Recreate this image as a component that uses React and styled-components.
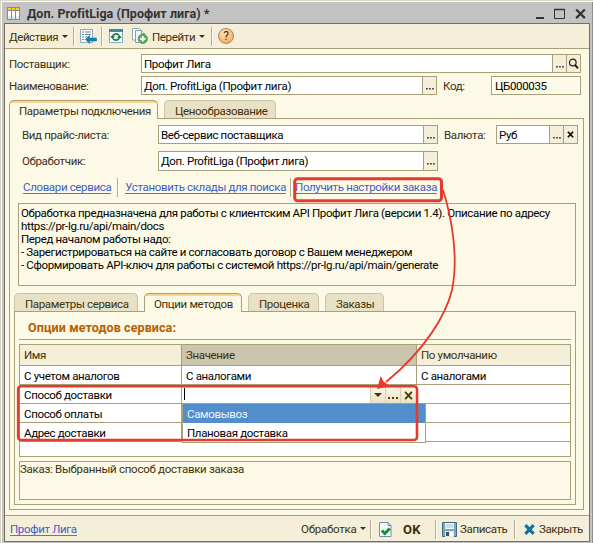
import React from "react";
import styled, { createGlobalStyle, css } from "styled-components";

const line = "#a9a078";
const cream = "#fcf9e6";
const sand = "#f5eed8";
const brown = "#40310a";

const Global = createGlobalStyle`
  *, *::before, *::after { box-sizing: border-box; }
  body {
    margin: 0;
    font: 11.5px/13px Roboto, "Liberation Sans", sans-serif;
    letter-spacing: -0.35px;
    color: #000;
  }
`;

const Frame = styled.div`
  position: relative;
  width: 593px;
  height: 543px;
  border: solid #ddd6c2;
  border-width: 1px 0 0 1px;
  background: #c3c3c3;
  box-shadow: inset 1px 1px 0 #fff, inset -1px 0 0 #8e8e8e;
  padding: 0 3px 2px 3px;
  display: flex;
  flex-direction: column;
  white-space: pre;
`;

const TitleBar = styled.header`
  height: 22px;
  flex: none;
  display: flex;
  align-items: center;
  padding: 3px 4px 0 3px;
`;

const Title = styled.h1`
  margin: 0 auto 0 7px;
  font-size: 12.5px;
  line-height: 15px;
  font-weight: 700;
  letter-spacing: 0.05px;
  color: #333;
`;

const Client = styled.div`
  flex: 1;
  border: 1px solid #716f65;
  background: ${cream};
  display: flex;
  flex-direction: column;
`;

const Toolbar = styled.div`
  height: 25px;
  flex: none;
  display: flex;
  align-items: center;
  padding-left: 4px;
  background: ${sand};
  border-bottom: 1px solid ${line};
`;

const Footer = styled.footer`
  height: 26px;
  flex: none;
  display: flex;
  align-items: center;
  padding: 2px 6px 0 5px;
  background: ${sand};
  border-top: 1px solid ${line};
`;

const Command = styled.div`
  display: flex;
  align-items: center;
  width: ${(p) => p.$w}px;
  gap: ${(p) => p.$gap || 4}px;
  padding-top: ${(p) => p.$drop || 0}px;
  letter-spacing: ${(p) => p.$ls || -0.35}px;
  color: ${brown};
`;

const Ok = styled.b`
  font-size: 13px;
  color: #3c2c06;
  letter-spacing: 0.4px;
`;

const Caret = styled.i`
  border: 3px solid transparent;
  border-top-color: ${brown};
  border-bottom: 0;
  margin-bottom: 2px;
`;

const Separator = styled.i`
  width: 2px;
  height: 19px;
  margin: 0 ${(p) => p.$after}px 0 ${(p) => p.$before}px;
  border-left: 1px solid #b5ae93;
  border-right: 1px solid #fffdf2;
`;

const Form = styled.main`
  flex: 1;
  display: flex;
  flex-direction: column;
  padding: 5px 5px 5px 4px;
`;

const FormRow = styled.div`
  display: flex;
  align-items: center;
  height: ${(p) => p.$h || 19}px;
  margin-bottom: ${(p) => p.$gap}px;
`;

const Label = styled.label`
  width: ${(p) => p.$w}px;
  padding-top: 1px;
  padding-left: ${(p) => p.$indent || 0}px;
  color: #3a301a;
`;

const FieldBox = styled.div`
  width: ${(p) => p.$w}px;
  height: 100%;
  display: flex;
  border: 1px solid ${line};
  background: #fff;
`;

const FieldText = styled.span`
  flex: 1;
  padding: 3px 0 0 2px;
  line-height: 13px;
  ${(p) =>
    p.$readonly &&
    css`
      margin: 1px 2px;
      padding: 2px 0 0 1px;
      background: ${cream};
    `}
`;

const FieldButton = styled.button`
  width: ${(p) => p.$w || 14}px;
  padding: 0;
  border: 0;
  border-left: 1px solid ${line};
  background: ${sand};
  display: flex;
  align-items: center;
  justify-content: center;
`;

const TabStrip = styled.nav`
  display: flex;
  gap: 6px;
  height: 18px;
  padding-left: ${(p) => p.$indent || 0}px;
`;

const Tab = styled.div`
  width: ${(p) => p.$w}px;
  height: 18px;
  padding: 4px 0 0 ${(p) => (p.$active ? 9 : 10)}px;
  border: 1px solid #c9c3a5;
  border-bottom: 0;
  border-radius: 5px 5px 0 0;
  background: #e8e1c5;
  color: ${brown};
  ${(p) =>
    p.$active &&
    css`
      position: relative;
      height: 19px;
      border-color: ${line};
      background: linear-gradient(#ffd28a 2px, ${cream} 2px);
    `}
`;

const TabPanel = styled.section`
  border: 1px solid ${line};
  display: flex;
  flex-direction: column;
  height: 392px;
  padding-top: 6px;
`;

const MethodPanel = styled(TabPanel)`
  margin-left: 4px;
  width: 562px;
  height: 194px;
  padding-top: 0;
`;

const Links = styled.div`
  display: flex;
  align-items: center;
  height: 20px;
  margin: 6px 0;
  padding-left: 13px;
`;

const Link = styled.a`
  color: #3c5fc4;
  line-height: 13px;
  height: 13px;
  border-bottom: 1px solid #5574cd;
`;

const Description = styled.div`
  height: 83px;
  margin: 0 7px 7px 8px;
  padding: 3px 2px;
  border: 1px solid ${line};
`;

const Heading = styled.h2`
  margin: 0 0 0 4px;
  padding: 9px 0 0 9px;
  height: 28px;
  width: 552px;
  font-size: 12.5px;
  line-height: 14px;
  letter-spacing: 0.1px;
  color: #b46000;
  border-bottom: 1px solid ${line};
`;

const Grid = styled.div`
  margin: 4px 0 4px 4px;
  width: 552px;
  height: 113px;
  border: 1px solid ${line};
  background: #fff;
`;

const GridRow = styled.div`
  display: grid;
  grid-template-columns: 162px 235px 1fr;
  height: ${(p) => (p.$head ? 21 : 19)}px;
`;

const Cell = styled.div`
  position: relative;
  padding: ${(p) => (p.$head ? 4 : 4)}px 0 0 4px;
  border-bottom: 1px solid ${line};
  border-right: 1px solid ${line};
  background: ${(p) => (p.$head ? (p.$current ? "#cac5ac" : sand) : "#fff")};
  color: ${(p) => (p.$head ? brown : "#000")};
  &:last-child { border-right: 0; }
`;

const EditCell = styled(Cell)`
  display: flex;
  justify-content: flex-end;
  padding: 2px 1px 0 2px;
`;

const TextCursor = styled.i`
  width: 1px;
  height: 12px;
  margin: 1px auto 0 0;
  background: #000;
`;

const CellButton = styled.button`
  width: 15px;
  height: 16px;
  padding: 0;
  border: 0;
  border-left: 1px solid #d8d0b3;
  background: linear-gradient(#faf6e6, #eae2c6);
  display: flex;
  align-items: center;
  justify-content: center;
`;

const DropList = styled.div`
  position: absolute;
  left: 0;
  top: 18px;
  width: 244px;
  height: 40px;
  border: 1px solid ${line};
  background: #fff;
  z-index: 2;
`;

const Option = styled.div`
  height: 19px;
  padding: 4px 0 0 4px;
  ${(p) => p.$selected && css`
    background: #528dcc;
    color: #e9f4ff;
  `}
`;

const Comment = styled.div`
  margin-left: 4px;
  width: 552px;
  height: 39px;
  padding: 1px 0;
  border: 1px solid ${line};
  letter-spacing: -0.28px;
  color: ${brown};
`;

const Push = styled.i`
  flex: 1;
`;

const Annotation = styled.svg`
  position: absolute;
  left: -1px;
  top: -1px;
  z-index: 5;
  pointer-events: none;
`;

const Dots = () => (
  <svg width="8" height="16" viewBox="0 0 8 16" fill="#222">
    <path d="M.2 10h1.500v1.500H.2zM3.200 10h1.500v1.500H3.200zM6.200 10h1.500v1.500H6.200z" />
  </svg>
);

const Cross = ({ color = "#000", size = 7, w = 1.8 }) => (
  <svg width={size} height={size} viewBox="0 0 8 8" stroke={color} strokeWidth={w}>
    <path d="M1 .8 7 7.2M7 .8 1 7.2" />
  </svg>
);

const Magnifier = () => (
  <svg width="11" height="12" viewBox="0 0 11 12" fill="none" stroke="#222">
    <circle cx="4.8" cy="4.5" r="3.3" strokeWidth="1.2" />
    <path d="M7 7l3 3.3" strokeWidth="2" />
  </svg>
);

const TableIcon = () => (
  <svg width="13" height="13" viewBox="0 0 13 13">
    <path d="M0 0h13v13H0z" fill="#7d8e95" />
    <path d="M1 1h3v2H1zM5 1h3v2H5zM9 1h3v2H9z" fill="#ffcc22" />
    <path d="M1 4h3v8H1zM5 4h3v8H5zM9 4h3v8H9z" fill="#fff" />
    <path d="M1 9h3v3H1zM5 9h3v3H5zM9 9h3v3H9z" fill="#dcebf2" />
  </svg>
);

const WindowButtons = () => (
  <svg width="50" height="14" viewBox="0 0 50 14" fill="none" stroke="#333">
    <path d="M0 11h8" strokeWidth="2" />
    <path d="M18.5 2.5h10v9h-10z" />
    <path d="M18 2.500h11" strokeWidth="1.500" />
    <path d="M40.2 2.5l8.6 8.6M48.8 2.5l-8.6 8.6" strokeWidth="2.2" />
  </svg>
);

const ListArrowIcon = () => (
  <svg width="17" height="16" viewBox="0 0 17 16">
    <path d="M.5 1.5h12v13H.5z" fill="#f6fafc" stroke="#8fabb9" />
    <path d="M2 4h2M2 6.5h2M2 9h2M2 11.500h2M5 4h6M5 6.500h6M5 9h4M5 11.500h3" stroke="#6c8da0" />
    <path d="M5.500 11.500l4-4v2.500h7v3H9.500v2.500z" fill="#1782b3" stroke="#0b6390" strokeWidth=".5" />
  </svg>
);

const RefreshIcon = () => (
  <svg width="14" height="14" viewBox="0 0 14 14">
    <path d="M.5.5h13v13H.5z" fill="#f4fbfc" stroke="#7fb0c2" />
    <path d="M0 0h14v3H0z" fill="#3f8aa9" />
    <path d="M3.600 7.500A3.400 3 0 0 1 9.800 6.200M10.400 8.500A3.400 3 0 0 1 4.200 9.800" fill="none" stroke="#14773a" strokeWidth="1.600" />
    <path d="M1.200 7.200h4.800L3.600 10zM8 8.800h4.800L10.400 6z" fill="#0d6b32" />
  </svg>
);

const AddCopyIcon = () => (
  <svg width="16" height="16" viewBox="0 0 16 16">
    <path d="M.5.5h7l2 2V12h-9z" fill="#fff" stroke="#8facb9" />
    <path d="M3.500 2.500h6l3 3v9h-9z" fill="#eef6fa" stroke="#7f9fae" />
    <path d="M9.500 2.500v3h3" fill="#fff" stroke="#7f9fae" />
    <circle cx="10.800" cy="10.800" r="4.600" fill="#5aae5c" stroke="#378b4a" strokeWidth=".8" />
    <path d="M10.800 8v5.600M8 10.800h5.600" stroke="#fff" strokeWidth="1.800" />
  </svg>
);

const HelpBadge = styled.span`
  width: 16px;
  height: 16px;
  border-radius: 50%;
  border: 1px solid #a58566;
  background: radial-gradient(circle at 40% 30%, #ffe5ba, #f9ad61 75%);
  color: #5c1f08;
  font-size: 12px;
  line-height: 14px;
  text-align: center;
  letter-spacing: 0;
`;

const CheckDocIcon = () => (
  <svg width="13" height="15" viewBox="0 0 13 15">
    <path d="M.5.5h8.500l3 3v11H.5z" fill="#f3f9fd" stroke="#6e91a5" />
    <path d="M9 .5v3h3" fill="none" stroke="#6e91a5" />
    <path d="M2.800 8.500l3 3L10.800 6.500" fill="none" stroke="#12902f" strokeWidth="3" />
  </svg>
);

const DiskIcon = () => (
  <svg width="15" height="15" viewBox="0 0 15 15">
    <path d="M.5.5h14v14H.5z" fill="#7fa8bb" stroke="#3e6a83" />
    <path d="M3 1h9v6H3z" fill="#f5fafc" />
    <path d="M3.500 3h8M3.500 5h8" stroke="#a9c1cd" />
    <path d="M3 9h9v6H3z" fill="#dce6eb" />
    <path d="M4 10h3v4H4z" fill="#38576a" />
    <path d="M8 10h3v4H8z" fill="#fff" />
  </svg>
);

function Field({ w, text, buttons = ["dots"], readonly }) {
  return (
    <FieldBox $w={w}>
      <FieldText $readonly={readonly}>{text}</FieldText>
      {buttons.map((kind) => (
        <FieldButton key={kind} $w={14}>
          {kind === "dots" && <Dots />}
          {kind === "clear" && <Cross />}
          {kind === "find" && <Magnifier />}
        </FieldButton>
      ))}
    </FieldBox>
  );
}

function MethodOptions() {
  return (
    <>
      <Heading>Опции методов сервиса:</Heading>
      <Grid>
        <GridRow $head>
          <Cell $head>Имя</Cell>
          <Cell $head $current>Значение</Cell>
          <Cell $head>По умолчанию</Cell>
        </GridRow>
        <GridRow>
          <Cell>С учетом аналогов</Cell>
          <Cell>С аналогами</Cell>
          <Cell>С аналогами</Cell>
        </GridRow>
        <GridRow>
          <Cell>Способ доставки</Cell>
          <EditCell>
            <TextCursor />
            <CellButton><svg width="8" height="4" viewBox="0 0 8 4"><path d="M0 0h8L4 4z" fill="#4d3500" /></svg></CellButton>
            <CellButton><svg width="10" height="10" viewBox="0 0 10 10" fill="#5a4000"><path d="M0 7h2v2H0zM4 7h2v2H4zM8 7h2v2H8z" /></svg></CellButton>
            <CellButton><Cross color="#4d3500" size={9} w={1.6} /></CellButton>
            <DropList>
              <Option $selected>Самовывоз</Option>
              <Option>Плановая доставка</Option>
            </DropList>
          </EditCell>
          <Cell />
        </GridRow>
        <GridRow><Cell>Способ оплаты</Cell><Cell /><Cell /></GridRow>
        <GridRow><Cell>Адрес доставки</Cell><Cell /><Cell /></GridRow>
      </Grid>
      <Comment>Заказ: Выбранный способ доставки заказа</Comment>
    </>
  );
}

export default function App() {
  return (
    <>
      <Global />
      <Frame>
        <TitleBar>
          <TableIcon />
          <Title>Доп. ProfitLiga (Профит лига) *</Title>
          <WindowButtons />
        </TitleBar>
        <Client>
          <Toolbar>
            <Command $w={59} $drop={2} $ls={-0.43}>Действия<Caret /></Command>
            <Separator $before={5} $after={5} />
            <ListArrowIcon />
            <Separator $before={4} $after={6} />
            <RefreshIcon />
            <Command $w={25} $gap={9}><i /><AddCopyIcon /></Command>
            <Command $w={58} $drop={2}><i />Перейти<Caret /></Command>
            <Separator $before={5} $after={5} />
            <HelpBadge>?</HelpBadge>
          </Toolbar>
          <Form>
            <FormRow $gap={3}>
              <Label $w={132}>Поставщик:</Label>
              <Field w={440} text="Профит Лига" buttons={["dots", "find"]} />
            </FormRow>
            <FormRow $gap={5}>
              <Label $w={132}>Наименование:</Label>
              <Field w={296} text="Доп. ProfitLiga (Профит лига)" />
              <Label $w={54} $indent={6}>Код:</Label>
              <Field w={90} text="ЦБ000035" buttons={[]} readonly />
            </FormRow>
            <TabStrip>
              <Tab $w={149} $active>Параметры подключения</Tab>
              <Tab $w={112}>Ценообразование</Tab>
            </TabStrip>
            <TabPanel>
              <FormRow $gap={7}>
                <Label $w={148} $indent={12}>Вид прайс-листа:</Label>
                <Field w={280} text="Веб-сервис поставщика" />
                <Label $w={58} $indent={6}>Валюта:</Label>
                <Field w={82} text="Руб" buttons={["dots", "clear"]} />
              </FormRow>
              <FormRow $gap={0} $h={20}>
                <Label $w={148} $indent={12}>Обработчик:</Label>
                <Field w={280} text="Доп. ProfitLiga (Профит лига)" />
              </FormRow>
              <Links>
                <Link>Словари сервиса</Link>
                <Separator $before={6} $after={6} />
                <Link>Установить склады для поиска</Link>
                <Separator $before={4} $after={3} />
                <Link>Получить настройки заказа</Link>
              </Links>
              <Description>
                {"Обработка предназначена для работы с клиентским API Профит Лига (версии 1.4). Описание по адресу\n" +
                  "https://pr-lg.ru/api/main/docs\n" +
                  "Перед началом работы надо:\n" +
                  "- Зарегистрироваться на сайте и согласовать договор с Вашем менеджером\n" +
                  "- Сформировать API-ключ для работы с системой https://pr-lg.ru/api/main/generate"}
              </Description>
              <TabStrip $indent={4}>
                <Tab $w={124}>Параметры сервиса</Tab>
                <Tab $w={98} $active>Опции методов</Tab>
                <Tab $w={71}>Проценка</Tab>
                <Tab $w={59}>Заказы</Tab>
              </TabStrip>
              <MethodPanel>
                <MethodOptions />
              </MethodPanel>
            </TabPanel>
          </Form>
          <Footer>
            <Link>Профит Лига</Link>
            <Push />
            <Command $w={64} $ls={-0.25}>Обработка<Caret /></Command>
            <Separator $before={5} $after={7} />
            <Command $w={56} $gap={11}><CheckDocIcon /><Ok>OK</Ok></Command>
            <Separator $before={0} $after={5} />
            <Command $w={67} $gap={3}><DiskIcon />Записать</Command>
            <Separator $before={5} $after={8} />
            <Command $w={59} $gap={4}><Cross color="#16729a" size={11} w={2.3} />Закрыть</Command>
          </Footer>
        </Client>
        <Annotation width="593" height="543" viewBox="0 0 593 543" fill="none" stroke="#e8392d">
          <rect x="294.700" y="178.700" width="146.800" height="22" rx="3" strokeWidth="3" />
          <rect x="18.200" y="386.200" width="398.800" height="53.800" rx="3" strokeWidth="2.600" />
          <path d="M443 190C451 215 459 256 452 290C446 315 425 350 386 382" strokeWidth="1.800" />
          <path d="M377 389L380.700 376L383.500 381.500L390 386Z" fill="#e8392d" stroke="none" />
        </Annotation>
      </Frame>
    </>
  );
}
